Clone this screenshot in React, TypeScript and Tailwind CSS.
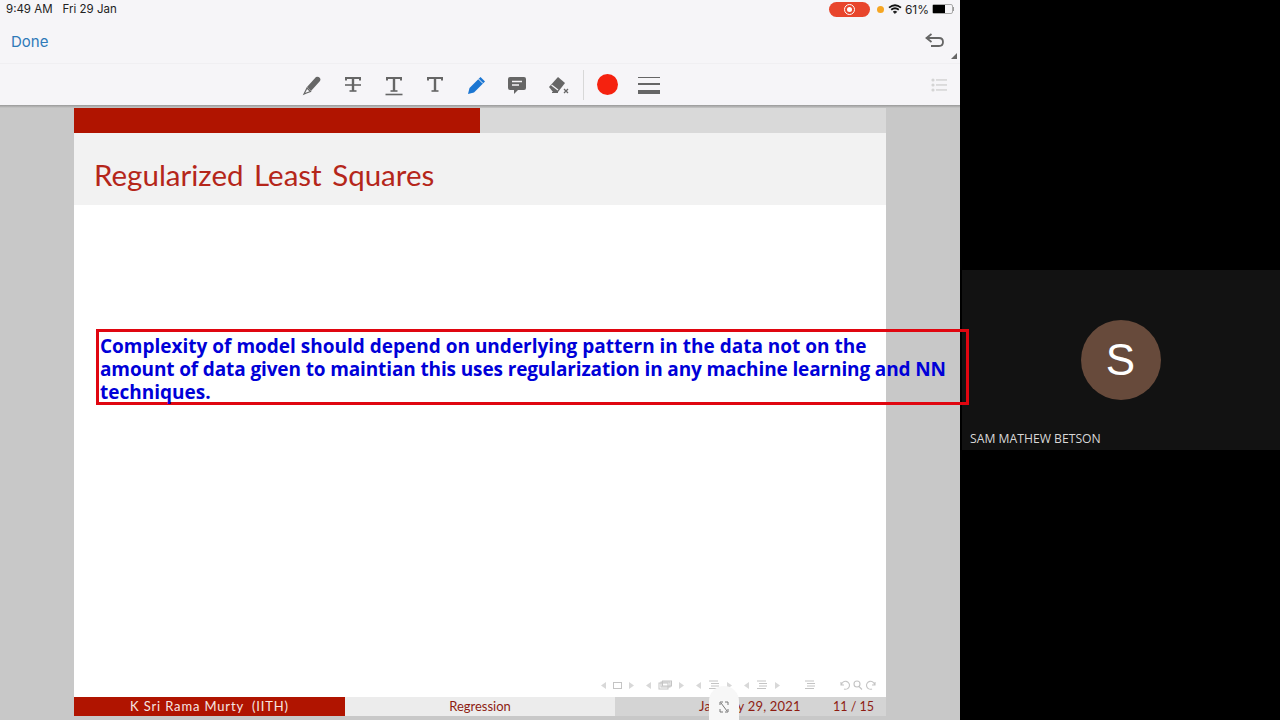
import React from "react";

const Pen = () => (
  <svg width="22" height="22" viewBox="0 0 22 22">
    <path d="M6 13 L15 3 Q17 2 19 4 Q20 6 19 7 L10 17 Z" fill="#666" />
    <path d="M6 14 L9.5 17.5 L5.5 19 L3 20 L4 18 Z" fill="none" stroke="#666" strokeWidth="1.2" />
  </svg>
);

const Pencil = () => (
  <svg width="22" height="22" viewBox="0 0 22 22">
    <path d="M3 20 L4.5 14 L15.5 3 L20 7.5 L9 18.5 Z" fill="#1b76d2" />
    <path d="M13.5 5 L18 9.5" stroke="#f6f5f8" strokeWidth="1" />
  </svg>
);

const TextIcon = ({ strike, under }: { strike?: boolean; under?: boolean }) => (
  <svg width="22" height="22" viewBox="0 0 22 22" fill="none" stroke="#666">
    <path d="M4 6.5 V4 H18 V6.5" strokeWidth="2" />
    <path d="M11 4 V17" strokeWidth="2.4" />
    <path d="M7.5 17 H14.5" strokeWidth="1.6" />
    {strike && <path d="M3 11 H19" strokeWidth="1.6" />}
    {under && <path d="M2.5 20.5 H19.5" strokeWidth="1.6" />}
  </svg>
);

const Note = () => (
  <svg width="22" height="22" viewBox="0 0 22 22">
    <path d="M4 3 H18 Q20 3 20 5 V14 Q20 16 18 16 H12 L8 20 V16 H4 Q2 16 2 14 V5 Q2 3 4 3 Z" fill="#666" />
    <path d="M6 7.5 H16 M6 11 H13" stroke="#f6f5f8" strokeWidth="1.5" />
  </svg>
);

const Eraser = () => (
  <svg width="24" height="22" viewBox="0 0 24 22">
    <path d="M2 13 L11 3 L18 9 L11 18 H6 Z" fill="#666" />
    <path d="M4.5 11 L11 16" stroke="#f6f5f8" strokeWidth="1.2" />
    <path d="M5 18.5 H11" stroke="#666" strokeWidth="1" />
    <path d="M17 15 L21 19 M21 15 L17 19" stroke="#666" strokeWidth="1.3" />
  </svg>
);

const Wifi = () => (
  <svg width="14" height="10" viewBox="0 0 14 10" fill="none" stroke="#111">
    <path d="M1 3.6 Q7 -1.2 13 3.6" strokeWidth="1.8" />
    <path d="M3.2 5.8 Q7 2.6 10.8 5.8" strokeWidth="1.8" />
    <path d="M5.2 7.8 L7 9.6 L8.8 7.8 Q7 6.4 5.2 7.8 Z" fill="#111" strokeWidth="0.6" />
  </svg>
);

const Undo = () => (
  <svg width="20" height="16" viewBox="0 0 20 16" fill="none" stroke="#666" strokeWidth="1.8">
    <path d="M6.5 1 L1.5 5 L6.5 9" />
    <path d="M2 5 H14 Q18 5 18 9 Q18 13 14 13 H6" />
  </svg>
);

const ListIcon = () => (
  <svg width="16" height="16" viewBox="0 0 16 16" fill="#d4d4d4">
    <circle cx="2" cy="3" r="1.6" />
    <circle cx="2" cy="8" r="1.6" />
    <circle cx="2" cy="13" r="1.6" />
    <rect x="5" y="2.2" width="11" height="1.5" />
    <rect x="5" y="7.2" width="11" height="1.5" />
    <rect x="5" y="12.2" width="11" height="1.5" />
  </svg>
);

// beamer nav symbols, bottom right of the slide
const Arrow = ({ right }: { right?: boolean }) => (
  <svg width="5" height="7" viewBox="0 0 5 7" fill="#d8d8d8">
    <path d={right ? "M0 0 L5 3.5 L0 7 Z" : "M5 0 L0 3.5 L5 7 Z"} />
  </svg>
);

const Lines = () => (
  <svg width="12" height="10" viewBox="0 0 12 10" stroke="#c4c4c4" strokeWidth="1">
    <path d="M1 1 H10 M3 3.5 H11 M3 6 H11 M1 8.5 H10" />
  </svg>
);

const NavGroup = ({ children }: { children: React.ReactNode }) => (
  <div className="flex items-center gap-[7px]">
    <Arrow />
    {children}
    <Arrow right />
  </div>
);

const SlideNav = () => (
  <div className="flex items-center justify-end gap-[12px] pr-[9px] h-[20px] mb-[2px]">
    <NavGroup>
      <div className="w-[9px] h-[7px] border border-[#c4c4c4]" />
    </NavGroup>
    <NavGroup>
      <svg width="14" height="10" viewBox="0 0 14 10" fill="none" stroke="#c4c4c4">
        <rect x="1" y="3" width="9" height="6" />
        <rect x="3" y="2" width="9" height="5" />
        <rect x="4.5" y="1" width="9" height="5" />
      </svg>
    </NavGroup>
    <NavGroup>
      <Lines />
    </NavGroup>
    <NavGroup>
      <Lines />
    </NavGroup>
    <div className="ml-[12px]">
      <Lines />
    </div>
    <svg className="ml-[11px]" width="38" height="12" viewBox="0 0 38 12" fill="none" stroke="#c4c4c4" strokeWidth="1.1">
      <path d="M2 3 V6 H5 M2.5 6 A4 4 0 1 1 5 10" />
      <circle cx="18" cy="5" r="3" />
      <path d="M20 7.5 L23 10.5" />
      <path d="M36 3 V6 H33 M35.5 6 A4 4 0 1 0 33 10" />
    </svg>
  </div>
);

export default function App() {
  const tools = [
    <Pen key="pen" />,
    <TextIcon key="strike" strike />,
    <TextIcon key="under" under />,
    <TextIcon key="plain" />,
    <Pencil key="pencil" />,
    <Note key="note" />,
    <Eraser key="eraser" />,
  ];

  return (
    <div className="relative flex w-[1280px] h-[720px] overflow-hidden bg-black font-['Liberation_Sans',sans-serif]">
      <div className="flex flex-col w-[960px] h-full bg-[#c8c8c8]">
        {/* status bar + nav */}
        <div className="h-[64px] bg-[#f6f5f8] border-b border-[#f0eff2]">
          <div className="flex items-center h-[18px] pl-[6px] pr-[6px] text-[#222]">
            <span className="mt-[2px] font-['Inter',sans-serif] text-[11.5px]">9:49 AM</span>
            <span className="mt-[2px] ml-[10px] font-['Inter',sans-serif] text-[11.5px]">Fri 29 Jan</span>
            <div className="ml-auto flex items-center">
              <div className="flex items-center justify-center w-[41px] h-[15px] rounded-full bg-[#e8452c]">
                <div className="flex items-center justify-center w-[11px] h-[11px] rounded-full border border-white">
                  <div className="w-[5px] h-[5px] rounded-full bg-white" />
                </div>
              </div>
              <div className="ml-[7px] w-[7px] h-[7px] rounded-full bg-[#f6a623]" />
              <div className="ml-[4px]">
                <Wifi />
              </div>
              <span className="ml-[3px] mt-[1px] font-['Inter',sans-serif] text-[12px]">61%</span>
              <div className="ml-[3px] flex items-center">
                <div className="w-[21px] h-[10px] rounded-[2px] border border-[#aaa]">
                  <div className="w-[12px] h-full bg-black" />
                </div>
                <div className="w-[1px] h-[4px] bg-[#999]" />
              </div>
            </div>
          </div>
          <div className="relative flex items-center justify-between h-[46px] pl-[11px] pr-[15px]">
            <span className="text-[15px] text-[#2f7ab8] font-['Inter',sans-serif] mt-[3px]">Done</span>
            <div className="-mt-[1px]">
              <Undo />
            </div>
            <div className="absolute right-[3px] bottom-[5px] w-0 h-0 border-l-[6px] border-l-transparent border-b-[6px] border-b-[#666]" />
          </div>
        </div>

        {/* annotation toolbar */}
        <div className="relative flex items-center h-[41px] bg-[#f6f5f8] pl-[301px]">
          <div className="flex items-center gap-[19px]">{tools}</div>
          <div className="ml-[12px] w-[1px] h-[30px] bg-[#d8d8d8]" />
          <div className="ml-[13px] w-[21px] h-[21px] rounded-full bg-[#f5220f]" />
          <div className="ml-[20px] mt-[1px] flex flex-col gap-[5px] w-[22px]">
            <div className="h-[1px] bg-[#666]" />
            <div className="h-[2px] bg-[#666]" />
            <div className="h-[4px] bg-[#666]" />
          </div>
          <div className="ml-auto mr-[13px]">
            <ListIcon />
          </div>
        </div>
        <div className="h-[3px] bg-gradient-to-b from-[#999] to-[#c8c8c8]" />

        {/* slide */}
        <div className="flex flex-1 min-h-0 flex-col ml-[74px] w-[812px] mb-[4px] bg-white">
          <div className="flex h-[25px] bg-[#d9d9d9]">
            <div className="w-[406px] bg-[#b01400]" />
          </div>
          <div className="flex items-center h-[72px] pl-[20px] pt-[12px] bg-[#f2f2f2]">
            <span className="font-['Lato',sans-serif] text-[29.5px] text-[#b5261a] [word-spacing:3px] whitespace-nowrap">
              Regularized Least Squares
            </span>
          </div>
          <div className="flex flex-1 flex-col justify-end">
            <SlideNav />
          </div>
          <div className="flex h-[19px] text-[13px] font-['Lato',sans-serif] leading-[19px] whitespace-nowrap">
            <div className="w-[271px] bg-[#b01400] text-center text-[#f6e5e2] tracking-[0.85px]">
              K Sri Rama Murty&nbsp; (IITH)
            </div>
            <div className="w-[270px] bg-[#ececec] text-center text-[#8e1c12]">Regression</div>
            <div className="flex flex-1 bg-[#d4d4d4] text-[#8e1c12] pl-[84px] pr-[12px] justify-between">
              <span className="tracking-[0.2px]">January 29, 2021</span>
              <span className="text-[12.5px]">11 / 15</span>
            </div>
          </div>
        </div>
      </div>

      {/* participant tile */}
      <div className="flex flex-col w-[320px] pt-[270px]">
        <div className="relative flex items-center justify-center h-[180px] ml-[2px] bg-[#121212]">
          <div className="flex items-center justify-center w-[80px] h-[80px] rounded-full bg-[#674a3b] text-[44px] text-white -mt-[1px] -ml-[1px]">
            S
          </div>
          <span className="absolute left-[8px] bottom-[2px] text-[12.2px] text-[#d8d8d8] font-['Open_Sans',sans-serif]">
            SAM MATHEW BETSON
          </span>
        </div>
      </div>

      {/* callout over the slide */}
      <div className="absolute left-[96px] top-[329px] w-[873px] h-[76px] border-[3px] border-[#e00610] pl-[1px] pt-[3px] text-[19px] leading-[23px] font-bold text-[#0000d8] font-['Open_Sans',sans-serif] whitespace-nowrap">
        Complexity of model should depend on underlying pattern in the data not on the
        <br />
        <span className="tracking-[-0.125px]">
          amount of data given to maintian this uses regularization in any machine learning and NN
        </span>
        <br />
        techniques.
      </div>

      {/* grabber for the bottom bar */}
      <div className="absolute left-[709px] top-[686px] flex justify-center w-[30px] h-[34px] pt-[15px] rounded-t-full bg-[#f7f7f7]">
        <svg width="10" height="12" viewBox="0 0 10 12" fill="none" stroke="#777" strokeWidth="1">
          <path d="M1 4 V1 H4 M6 1 H9 V4 M1 8 V11 H4 M6 11 H9 V8 M2 2 L8 10" />
        </svg>
      </div>
    </div>
  );
}
